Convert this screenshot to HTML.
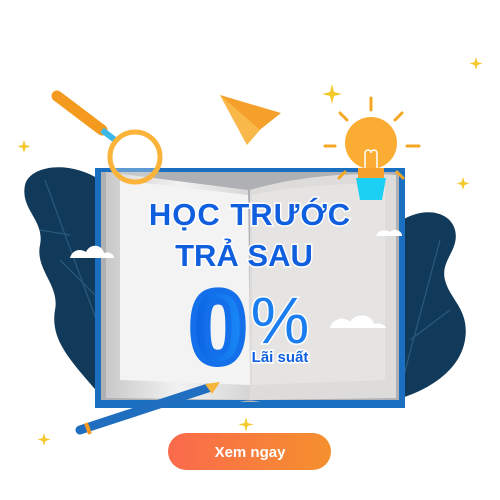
<!DOCTYPE html>
<html><head><meta charset="utf-8"><style>
html,body{margin:0;padding:0;background:#fff;width:500px;height:500px;overflow:hidden}
svg{position:absolute;left:0;top:0}
</style></head><body>
<svg width="500" height="500" viewBox="0 0 500 500">
<defs>
<linearGradient id="btn" x1="0" x2="1"><stop offset="0" stop-color="#fa6a4c"/><stop offset="1" stop-color="#f5902e"/></linearGradient>
<linearGradient id="zero" x1="0" x2="1"><stop offset="0" stop-color="#0a5fe0"/><stop offset="1" stop-color="#1a8cf8"/></linearGradient>
<linearGradient id="pg" x1="0" x2="1"><stop offset="0" stop-color="#c9c9c9"/><stop offset=".5" stop-color="#f2f2f2"/><stop offset="1" stop-color="#d4d4d4"/></linearGradient>
</defs>
<g fill="#f4c92c">
<path d="M332 84l2 8 8 2-8 2-2 8-2-8-8-2 8-2z"/><path d="M476 57l1.5 5 5 1.5-5 1.5-1.5 5-1.5-5-5-1.5 5-1.5z"/>
<path d="M463 177l1.5 5 5 1.5-5 1.5-1.5 5-1.5-5-5-1.5 5-1.5z"/><path d="M24 140l1.5 5 5 1.5-5 1.5-1.5 5-1.5-5-5-1.5 5-1.5z"/>
<path d="M44 433l1.5 5 5 1.5-5 1.5-1.5 5-1.5-5-5-1.5 5-1.5z"/><path d="M246 417l1.5 6 6 1.5-6 1.5-1.5 6-1.5-6-6-1.5 6-1.5z"/>
<path d="M434 336l1.5 5 5 1.5-5 1.5-1.5 5-1.5-5-5-1.5 5-1.5z"/>
</g>
<path d="M100 180 C70 160 30 165 25 185 C20 210 45 220 40 245 C35 270 60 285 55 310 C50 340 70 360 100 395 Z" fill="#113a5a"/>
<path d="M395 225 C420 205 450 210 455 230 C460 250 440 260 445 280 C450 300 470 310 465 340 C460 370 430 390 395 400 Z" fill="#113a5a"/>
<path d="M45 180 L100 330 M60 260 L100 300 M40 230 L70 235" stroke="#2a5a7c" stroke-width="1.2" fill="none"/>
<path d="M440 240 L400 390 M450 310 L410 340" stroke="#2a5a7c" stroke-width="1.2" fill="none"/>
<rect x="95" y="168" width="310" height="240" fill="#1a6fc0"/>
<rect x="101" y="172" width="298" height="230" fill="#aeb0b3"/>
<path d="M106 172 L248 190 L252 400 L106 398 Z" fill="url(#pg)"/>
<path d="M250 190 C300 175 360 172 396 175 L396 398 L250 400 Z" fill="#dedcda"/>
<path d="M120 180 L248 195 L250 385 L120 380 Z" fill="#f3f3f3"/>
<path d="M252 195 C300 185 360 182 385 185 L385 380 L252 385 Z" fill="#e6e4e2"/>
<path d="M95 400 L405 400 L405 408 L270 408 C262 398 238 398 230 408 L95 408 Z" fill="#1a6fc0"/>
<g fill="#fff"><path d="M70 258 C72 250 80 248 86 252 C90 243 102 244 104 253 C110 251 114 255 114 258 Z"/>
<path d="M330 328 C332 318 345 316 350 322 C356 312 372 314 374 324 C380 322 386 326 386 328 Z"/>
<path d="M376 236 C378 230 386 229 390 232 C394 228 402 230 402 236 Z"/></g>
<path d="M57 96 L102 130" stroke="#f49a1f" stroke-width="11" stroke-linecap="round"/>
<path d="M102 130 L115 140" stroke="#3bb8e8" stroke-width="6"/>
<circle cx="135" cy="157" r="25" fill="rgba(255,255,255,.3)" stroke="#fbb33a" stroke-width="5"/>
<path d="M220 95 L281 113 L247 140 L243 138 L247 145 Z" fill="#f5a02a"/><path d="M220 95 L260 130 L247 145 Z" fill="#f8b94a"/>
<g stroke="#f5a623" stroke-width="3" stroke-linecap="round"><path d="M371 98v12M340 113l7 7M402 113l-7 7M325 146h10M407 146h12M339 178l6-6M403 178l-6-6"/></g>
<circle cx="371" cy="143" r="26" fill="#fbac33"/>
<rect x="358" y="168" width="26" height="10" fill="#f7a12c"/>
<path d="M356 178h30l-4 22h-22z" fill="#1bd0f2"/>
<path d="M365 168v-15a3 3 0 016 0M371 153a3 3 0 016 0v15" stroke="#fff" stroke-width="1.5" fill="none"/>
<path d="M80 430 L208 388" stroke="#1f6ec0" stroke-width="9" stroke-linecap="round"/>
<path d="M205 384 L220 382 L212 394 Z" fill="#f4b63c"/>
<path d="M86 423 L90 434" stroke="#f49a1f" stroke-width="4"/>
<g font-family="'Liberation Sans',sans-serif" font-weight="bold" text-anchor="middle" fill="#0f5fdf" stroke="#fff" stroke-width="3" paint-order="stroke">
<text x="250" y="225" font-size="31" letter-spacing="1">HỌC TRƯỚC</text>
<text x="244" y="266" font-size="31">TRẢ SAU</text>
<text x="280" y="343" font-size="66" font-weight="normal" fill="#1a7ef0">%</text>
<text x="280" y="362" font-size="15" fill="#0f5fdf">Lãi suất</text>
</g>
<text x="218" y="363" font-family="'Liberation Sans',sans-serif" font-weight="bold" font-size="104" text-anchor="middle" fill="url(#zero)" stroke="#1470ea" stroke-width="6" stroke-linejoin="round">0</text>
<rect x="168" y="433" width="163" height="37" rx="18.5" fill="url(#btn)"/>
<text x="250" y="457" font-family="'Liberation Sans',sans-serif" font-weight="bold" font-size="15" fill="#fff" text-anchor="middle">Xem ngay</text>
</svg>
</body></html>
